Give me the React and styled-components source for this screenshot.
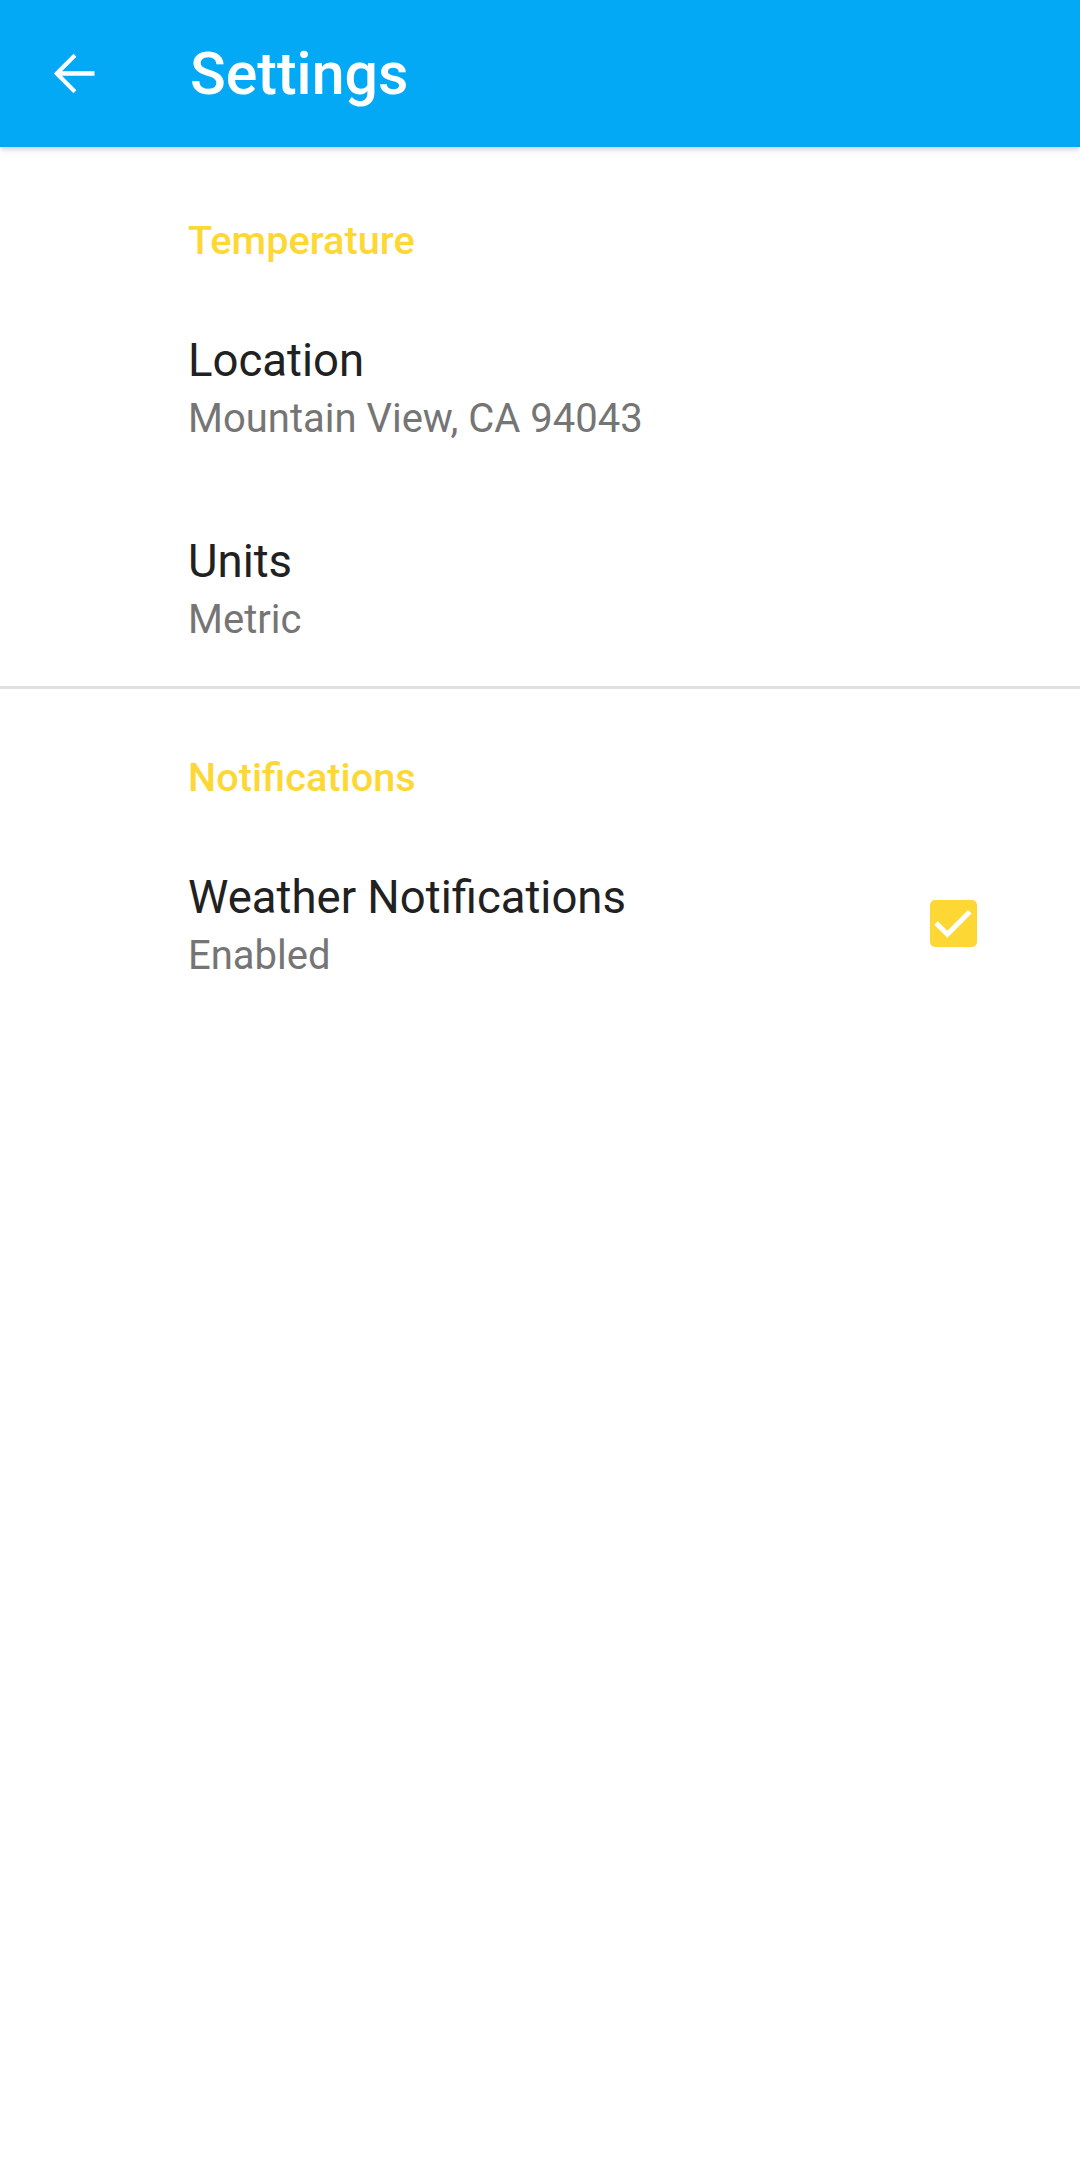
import React from "react";
import styled, { createGlobalStyle } from "styled-components";

const GlobalStyle = createGlobalStyle`
  html, body {
    margin: 0;
    padding: 0;
    background: #ffffff;
    font-family: Roboto, "Noto Sans", sans-serif;
  }
`;

const Page = styled.div`
  width: 1080px;
  min-height: 2158px;
  background: #ffffff;
`;

const Toolbar = styled.header`
  display: flex;
  align-items: center;
  height: 147px;
  background: #03a9f4;
  box-shadow: 0 3px 6px rgba(0, 0, 0, 0.12), 0 2px 3px rgba(0, 0, 0, 0.08);
  position: relative;
  z-index: 1;
`;

const NavButton = styled.button`
  display: flex;
  align-items: center;
  justify-content: center;
  width: 147px;
  height: 147px;
  padding: 0;
  border: none;
  background: transparent;
  color: #ffffff;
`;

const Title = styled.h1`
  margin: 0 0 0 43px;
  font-size: 59px;
  font-weight: 500;
  color: #ffffff;
  line-height: 1;
`;

const List = styled.main`
  padding-top: 4.8px;
`;

const Section = styled.section`
  display: flex;
  flex-direction: column;
`;

const Category = styled.h2`
  margin: 67.1px 0 26.5px;
  padding-left: 188px;
  font-size: 39.7px;
  line-height: 44px;
  font-weight: 500;
  color: #fdd835;
`;

const Item = styled.div`
  display: flex;
  align-items: center;
  padding: 42.8px 103px 42.8px 188px;

  &:last-child {
    padding-bottom: 38.2px;
  }
`;

const ItemText = styled.div`
  flex: 1;
  display: flex;
  flex-direction: column;
`;

const ItemTitle = styled.div`
  font-size: 45.5px;
  line-height: 58px;
  color: #212121;
`;

const ItemSummary = styled.div`
  font-size: 40px;
  line-height: 57px;
  color: #757575;
`;

const Divider = styled.hr`
  margin: 0;
  border: none;
  height: 3px;
  background: #e0e0e0;
`;

const CheckBox = styled.div`
  width: 47px;
  height: 47px;
  border-radius: 5px;
  background: #fdd835;
  margin-top: -6px;
  display: flex;
`;

const BackIcon = () => (
  <svg width="63" height="63" viewBox="0 0 24 24" fill="currentColor">
    <path d="M20 11.1H7.6l5.5-5.5L12 4.5 4.5 12l7.5 7.5 1.1-1.1-5.5-5.5H20z" />
  </svg>
);

const Check = () => (
  <CheckBox>
    <svg width="47" height="47" viewBox="0 0 47 47">
      <path
        d="M6 23 L17.4 34.3 L39.8 11.8"
        fill="none"
        stroke="#ffffff"
        strokeWidth="5"
      />
    </svg>
  </CheckBox>
);

const sections = [
  {
    title: "Temperature",
    items: [
      { title: "Location", summary: "Mountain View, CA 94043" },
      { title: "Units", summary: "Metric" },
    ],
  },
  {
    title: "Notifications",
    items: [{ title: "Weather Notifications", summary: "Enabled", checked: true }],
  },
];

const App = () => {
  return (
    <Page>
      <GlobalStyle />
      <Toolbar>
        <NavButton aria-label="Back">
          <BackIcon />
        </NavButton>
        <Title>Settings</Title>
      </Toolbar>
      <List>
        {sections.map((section, i) => (
          <React.Fragment key={section.title}>
            {i > 0 && <Divider />}
            <Section>
              <Category>{section.title}</Category>
              {section.items.map((item) => (
                <Item key={item.title}>
                  <ItemText>
                    <ItemTitle>{item.title}</ItemTitle>
                    <ItemSummary>{item.summary}</ItemSummary>
                  </ItemText>
                  {item.checked && <Check />}
                </Item>
              ))}
            </Section>
          </React.Fragment>
        ))}
      </List>
    </Page>
  );
};

export default App;
